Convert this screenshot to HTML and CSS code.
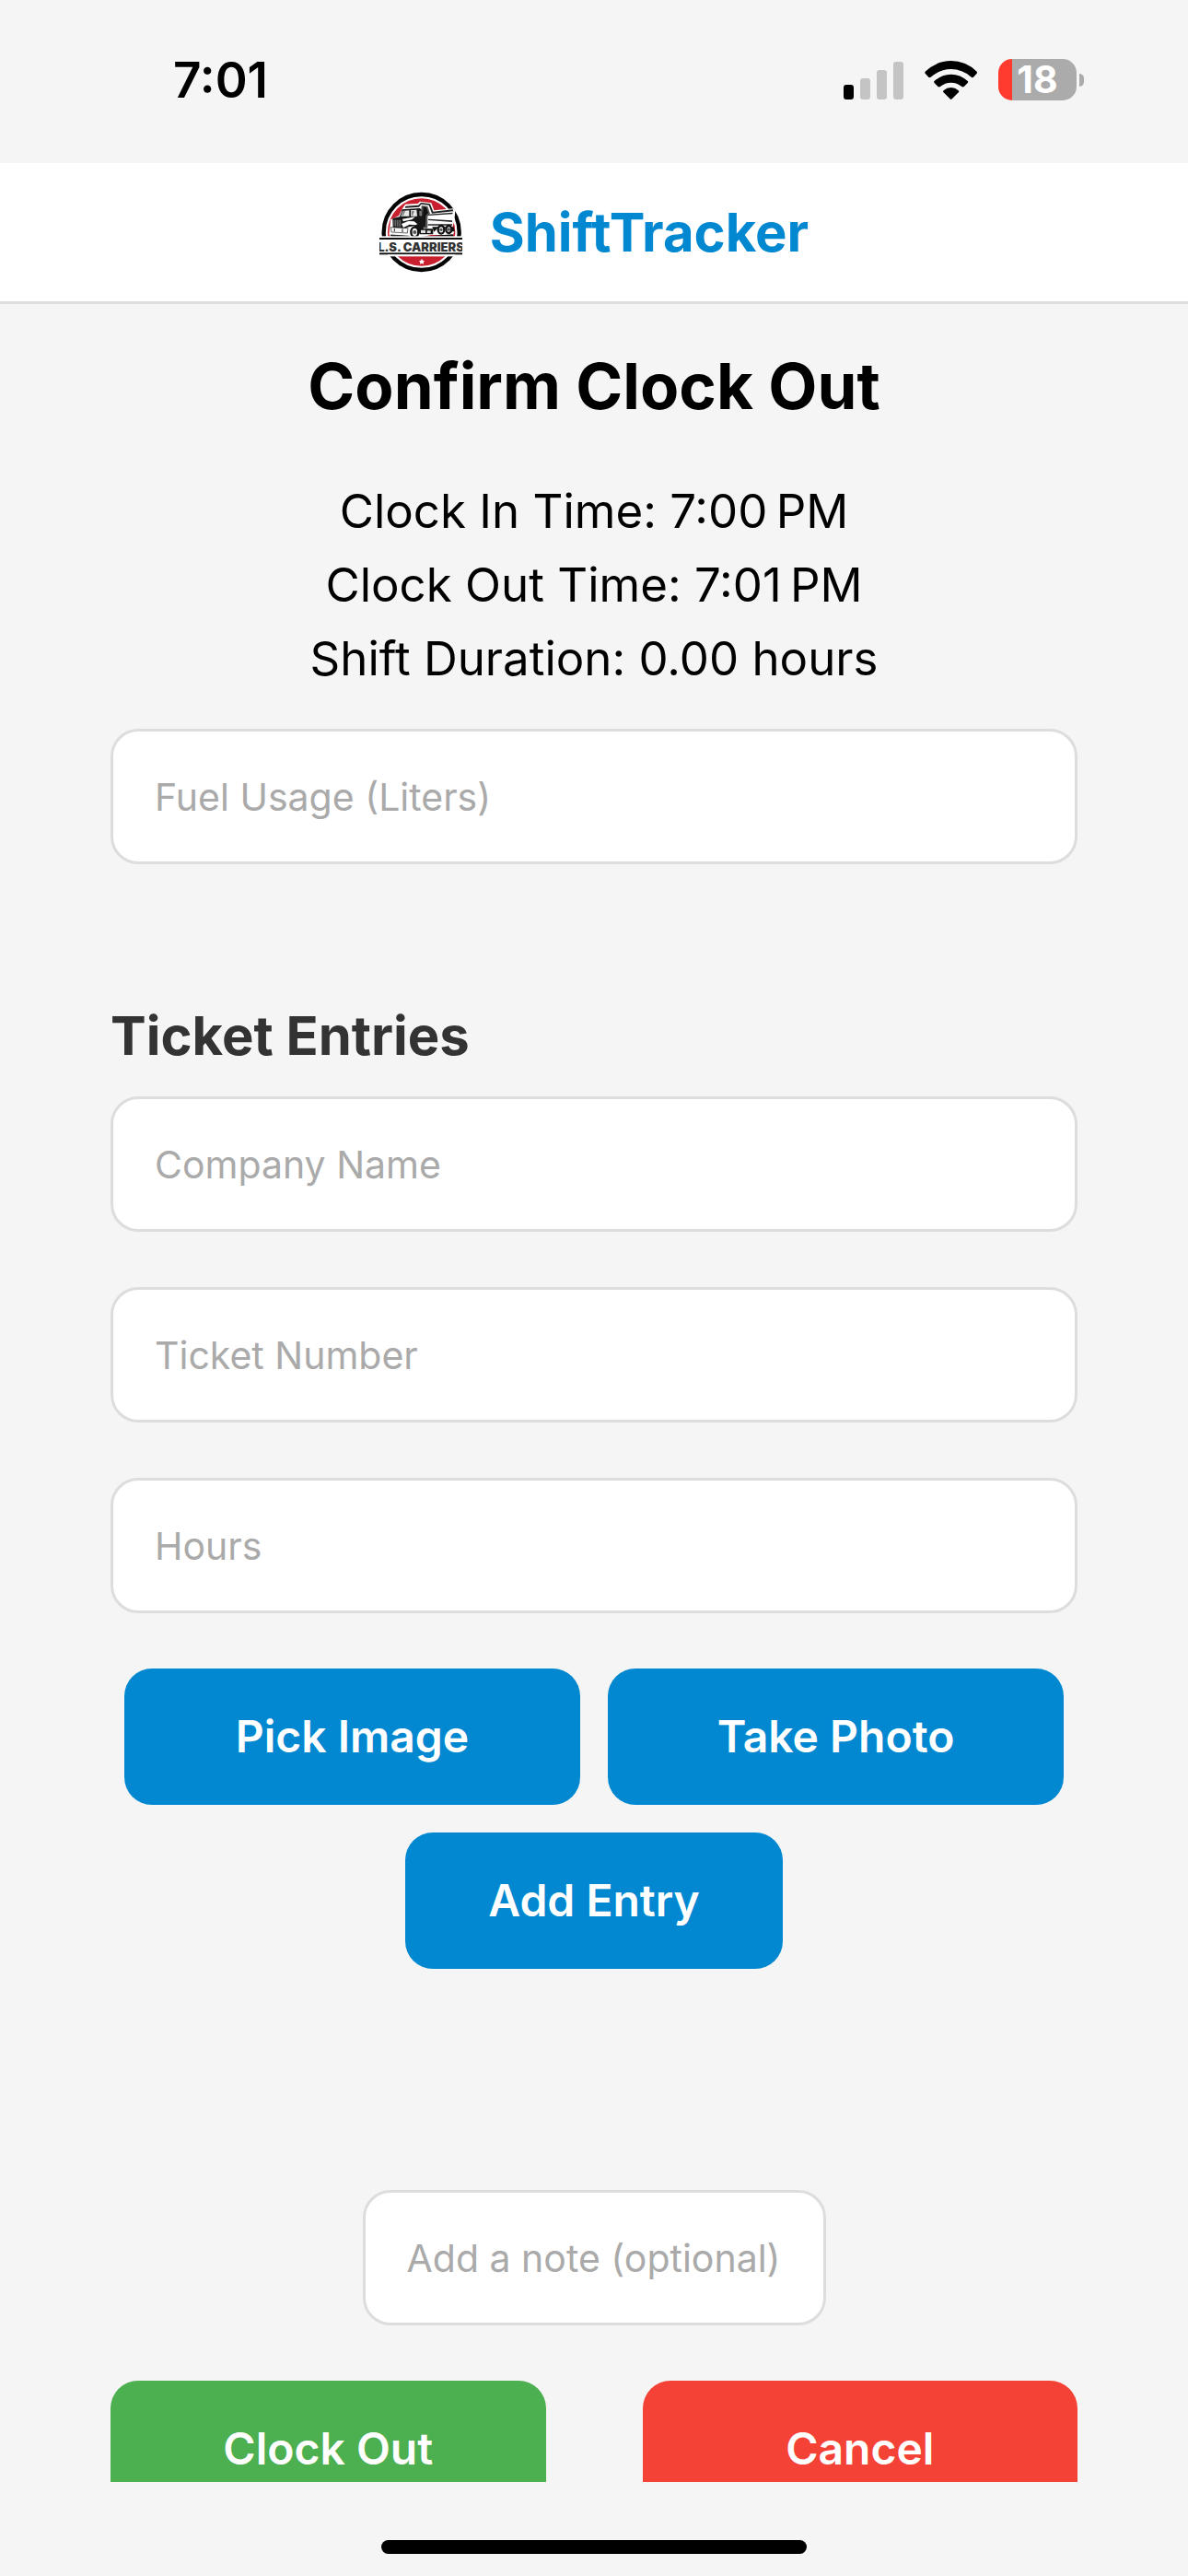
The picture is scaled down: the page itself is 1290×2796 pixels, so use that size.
FILE: index.html
```html
<!DOCTYPE html>
<html lang="en">
<head>
  <meta charset="utf-8">
  <meta name="viewport" content="width=device-width, initial-scale=1">
  <title>ShiftTracker – Confirm Clock Out</title>
  <link rel="stylesheet" href="styles.css">
</head>
<body>
  <div class="app">
    <div class="status-bar">
      <span class="status-time">7:01</span>
      <div class="status-icons">
        <svg class="icon-signal" viewBox="0 0 65 42" role="img" aria-label="Signal strength, one bar">
          <rect x="0" y="26" width="11" height="16" rx="3" fill="#000"/>
          <rect x="18" y="19" width="11" height="23" rx="3" fill="#c4c4c4"/>
          <rect x="36" y="10" width="11" height="32" rx="3" fill="#c4c4c4"/>
          <rect x="54" y="1" width="11" height="41" rx="3" fill="#c4c4c4"/>
        </svg>
        <svg class="icon-wifi" viewBox="341 75 172 126" role="img" aria-label="Wi-Fi">
          <path d="M343 110Q380 75 427.500 75T512 110Q514 113 512 116L501 128Q498 131 494 128Q464 102 427.500 102T361 128Q358 131 354 128L343 116Q341 113 343 110Z"/>
          <path d="M373 141Q397 119 427.500 119T482 141Q485 144 482 147L470 159Q467 162 463 159Q447 146 427.500 146T392 159Q388 162 385 159L373 147Q370 144 373 141Z"/>
          <path d="M403 172Q414 162 427.500 162T452 172Q455 175 452 178L430 200Q427.500 202 425 200L403 178Q400 175 403 172Z"/>
        </svg>
        <div class="battery">
          <div class="battery-body"><span class="battery-level">18</span></div>
          <div class="battery-cap"></div>
        </div>
      </div>
    </div>

    <header class="header">
      <svg class="logo" viewBox="33 36 270 270" role="img" aria-label="L.S. Carriers">
        <circle cx="170" cy="171" r="123" fill="#fff" stroke="#050505" stroke-width="13"/>
        <circle cx="170" cy="171" r="110" fill="#c8202f"/>
        <!-- tipper bed -->
        <path d="M109 92L117 80L158 78L165 71L202 76L211 100L274 94L280 101L277 133L270 160L277 168L273 180H200L160 190H72L64 178L70 130L96 118Z" fill="#fff"/>
        <path d="M118 86L160 83L168 75L198 79L208 104L272 97L274 103L204 110L194 83L169 80L162 89L116 92Z" fill="#222"/>
        <path d="M192 113L272 107L271 112L192 117ZM192 128L270 133V138L192 132ZM191 145H270V149H191Z" fill="#222"/>
        <path d="M170 84L190 87L198 110L190 120V158H168V118Z" fill="#555"/>
        <path d="M176 88L186 90L192 109L184 116L182 153H175V112Z" fill="#111"/>
        <!-- cab -->
        <path d="M107 97L165 93L176 105V164H155L145 151L123 155L107 170L77 158L76 126L99 121Z" fill="#161616"/>
        <path d="M108 102L130 100V119H103ZM135 100L154 98L156 119H135Z" fill="#e8e8e8"/>
        <path d="M108 103L118 102L111 117H106ZM137 103L147 101L142 116H137Z" fill="#888"/>
        <path d="M108 128L150 121L139 130L110 136ZM105 144L127 135L146 136L157 145L150 148L131 146L111 156Z" fill="#fff"/>
        <path d="M81 131V151M86 131V152M91 131V153M96 131V154M101 131V154" stroke="#aaa" stroke-width="2"/>
        <path d="M163 101V116Q169 121 172 116V101Z" fill="#777"/>
        <!-- bumper and chassis -->
        <path d="M70 155L126 158L124 174L72 171Z" fill="#f5f5f5" stroke="#222" stroke-width="2"/>
        <path d="M82 159V169M108 160V171M70 180L130 184V189H75Z" stroke="#222" stroke-width="3" fill="#222"/>
        <path d="M158 160H208V178H164Z" fill="#111"/>
        <path d="M168 164H183V174H168ZM188 166H200V174H188Z" fill="#ddd"/>
        <path d="M205 154H275L278 169H267L255 158H222L211 170Z" fill="#111"/>
        <g fill="#eee" stroke="#111" stroke-width="7">
          <ellipse cx="148" cy="171" rx="12" ry="16"/>
          <ellipse cx="234" cy="163" rx="10" ry="13"/>
          <ellipse cx="259" cy="162" rx="9" ry="12"/>
        </g>
        <g fill="#555">
          <circle cx="148" cy="171" r="6"/>
          <circle cx="234" cy="163" r="5"/>
          <circle cx="259" cy="162" r="5"/>
        </g>
        <path d="M75 190L155 187L272 178L276 188H75Z" fill="#080808"/>
        <!-- name banner -->
        <rect x="33" y="184" width="270" height="64" fill="#fff"/>
        <rect x="33" y="189" width="270" height="6" fill="#111"/>
        <rect x="33" y="238" width="270" height="6" fill="#111"/>
        <rect x="60" y="244" width="220" height="6" fill="#fff"/>
        <text class="logo-text" x="168" y="233" text-anchor="middle">L.S. CARRIERS</text>
        <path d="M171 257L174 263L180 264L176 269L177 275L171 272L165 275L166 269L162 264L168 263Z" fill="#fff"/>
      </svg>
      <span class="brand">ShiftTracker</span>
    </header>

    <main class="content">
      <h1 class="title">Confirm Clock Out</h1>
      <div class="summary">
        <p>Clock In Time: 7:00&#8239;PM</p>
        <p>Clock Out Time: 7:01&#8239;PM</p>
        <p>Shift Duration: 0.00 hours</p>
      </div>

      <form class="form">
        <input class="field" type="text" inputmode="decimal" placeholder="Fuel Usage (Liters)" aria-label="Fuel Usage (Liters)">

        <section class="entries">
          <h2 class="section-title">Ticket Entries</h2>
          <div class="fields">
            <input class="field" type="text" placeholder="Company Name" aria-label="Company Name">
            <input class="field" type="text" placeholder="Ticket Number" aria-label="Ticket Number">
            <input class="field" type="text" inputmode="decimal" placeholder="Hours" aria-label="Hours">
          </div>
          <div class="entry-actions">
            <button class="button" type="button">Pick Image</button>
            <button class="button" type="button">Take Photo</button>
          </div>
          <button class="button button-add" type="button">Add Entry</button>
        </section>

        <input class="field field-note" type="text" placeholder="Add a note (optional)" aria-label="Add a note (optional)">

        <div class="form-actions">
          <button class="button button-confirm" type="submit">Clock Out</button>
          <button class="button button-cancel" type="button">Cancel</button>
        </div>
      </form>
    </main>

    <div class="home-area"><div class="home-indicator"></div></div>
  </div>
</body>
</html>
```
FILE: styles.css
```css
* {
  box-sizing: border-box;
}

body {
  margin: 0;
  background: #f5f5f5;
  color: #000;
  font-family: Inter, "Liberation Sans", sans-serif;
}

h1,
h2,
p {
  margin: 0;
}

.app {
  display: flex;
  flex-direction: column;
  height: 100vh;
}

/* Status bar */
.status-bar {
  display: flex;
  flex: none;
  align-items: center;
  justify-content: space-between;
  height: 177px;
  padding: 0 113px 4px 188px;
}

.status-time {
  font-size: 53px;
  font-weight: 600;
  line-height: 64px;
}

.status-icons {
  display: flex;
  align-items: center;
  gap: 23px;
}

.icon-signal {
  width: 65px;
  height: 42px;
}

.icon-wifi {
  width: 57px;
  height: 42px;
}

.battery {
  display: flex;
  align-items: center;
  gap: 3px;
}

.battery-body {
  display: flex;
  align-items: center;
  justify-content: center;
  width: 85px;
  height: 45px;
  border-radius: 15px;
  background: linear-gradient(to right, #ff3b30 15px, #ababab 15px);
}

.battery-level {
  color: #fff;
  font-size: 41px;
  font-weight: 700;
  line-height: 45px;
}

.battery-cap {
  width: 5px;
  height: 14px;
  border-radius: 0 5px 5px 0;
  background: #ababab;
}

/* App header */
.header {
  display: flex;
  flex: none;
  align-items: center;
  justify-content: center;
  gap: 30px;
  padding: 30px;
  border-bottom: 3px solid #ddd;
  background: #fff;
}

.logo {
  width: 90px;
  height: 90px;
}

.logo-text {
  fill: #333;
  font-size: 39px;
  font-weight: 900;
}

.brand {
  color: #0288d1;
  font-size: 58px;
  font-weight: 700;
  line-height: 72px;
}

/* Page content */
.content {
  flex: 1;
  min-height: 0;
  padding: 44px 120px;
  overflow-y: auto;
  scrollbar-width: none;
}

.title {
  font-size: 69px;
  font-weight: 700;
  line-height: 90px;
  text-align: center;
}

.summary {
  margin: 51px 0 36px;
  font-size: 51px;
  line-height: 80px;
  text-align: center;
}

.form,
.entries,
.fields {
  display: flex;
  flex-direction: column;
}

.field {
  width: 100%;
  height: 147px;
  padding: 0 45px;
  border: 3px solid #ddd;
  border-radius: 30px;
  background: #fff;
  color: #000;
  font: 400 41px Inter, "Liberation Sans", sans-serif;
}

.field::placeholder {
  color: #aaa;
  opacity: 1;
}

.entries {
  margin: 150px 0 240px;
}

.section-title {
  margin-bottom: 30px;
  color: #333;
  font-size: 58px;
  font-weight: 700;
  line-height: 72px;
}

.fields {
  gap: 60px;
}

.entry-actions {
  display: flex;
  gap: 30px;
  margin: 60px 0 30px;
  padding: 0 15px;
}

.button {
  flex: 1;
  padding: 44px 30px;
  border: 0;
  border-radius: 30px;
  background: #0288d1;
  color: #fff;
  font: 600 48px/60px Inter, "Liberation Sans", sans-serif;
}

.button-add {
  flex: none;
  align-self: center;
  padding: 44px 90px;
}

.field-note {
  align-self: center;
  width: 503px;
}

.form-actions {
  display: flex;
  justify-content: space-between;
  margin-top: 60px;
}

.form-actions .button {
  flex: 0 0 45%;
}

.button-confirm {
  background: #4caf50;
}

.button-cancel {
  background: #f44336;
}

/* Home indicator */
.home-area {
  display: flex;
  flex: none;
  align-items: flex-end;
  justify-content: center;
  height: 102px;
  padding-bottom: 24px;
}

.home-indicator {
  width: 462px;
  height: 15px;
  border-radius: 8px;
  background: #000;
}
```
